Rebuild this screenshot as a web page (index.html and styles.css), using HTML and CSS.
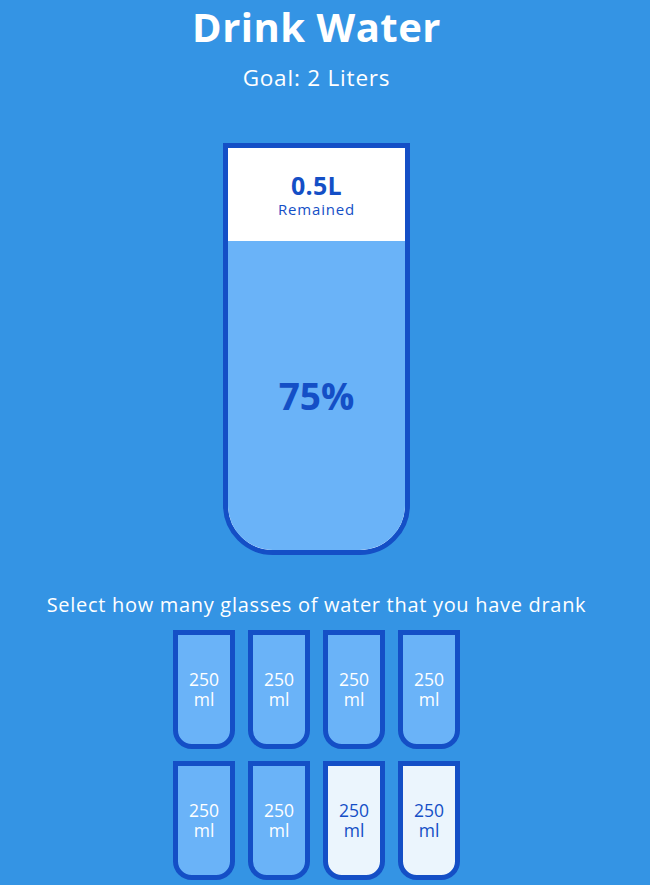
FILE: index.html
```html
<!DOCTYPE html>
<html lang="en">
<head>
  <meta charset="UTF-8">
  <meta name="viewport" content="width=device-width, initial-scale=1.0">
  <title>Drink Water</title>
  <link rel="stylesheet" href="styles.css">
</head>
<body>
  <h1>Drink Water</h1>
  <h3>Goal: 2 Liters</h3>

  <div class="cup">
    <div class="remained">
      <span class="liters">0.5L</span>
      <small>Remained</small>
    </div>
    <div class="percentage">75%</div>
  </div>

  <p class="text">Select how many glasses of water that you have drank</p>

  <div class="cups">
    <div class="cup cup-small full">250 ml</div>
    <div class="cup cup-small full">250 ml</div>
    <div class="cup cup-small full">250 ml</div>
    <div class="cup cup-small full">250 ml</div>
    <div class="cup cup-small full">250 ml</div>
    <div class="cup cup-small full">250 ml</div>
    <div class="cup cup-small">250 ml</div>
    <div class="cup cup-small">250 ml</div>
  </div>
</body>
</html>
```
FILE: styles.css
```css
:root {
  --border-color: #144fc6;
  --fill-color: #6ab3f8;
}

* {
  box-sizing: border-box;
}

html {
  overflow: hidden;
}

body {
  background-color: #3494e4;
  color: #fff;
  font-family: "Open Sans", Arial, sans-serif;
  display: flex;
  flex-direction: column;
  align-items: center;
  width: 633px;
  margin: 0;
}

h1 {
  font-size: 40px;
  line-height: 48px;
  letter-spacing: 0.5px;
  margin: 3px 0 0;
}

h3 {
  font-size: 22.5px;
  line-height: 28px;
  font-weight: 400;
  letter-spacing: 0.8px;
  margin: 13px 0 0;
}

.cup {
  background-color: #fff;
  border: 5px solid var(--border-color);
  color: var(--border-color);
  border-radius: 0 0 50px 50px;
  height: 412px;
  width: 187px;
  margin: 51px 0 0;
  display: flex;
  flex-direction: column;
  overflow: hidden;
}

.remained {
  display: flex;
  flex-direction: column;
  align-items: center;
  justify-content: center;
  text-align: center;
  flex: 1;
}

.remained .liters {
  font-size: 25px;
  line-height: 28px;
  font-weight: 700;
  letter-spacing: 0.3px;
}

.remained small {
  font-size: 15px;
  line-height: 20px;
  letter-spacing: 0.8px;
}

.percentage {
  background-color: var(--fill-color);
  display: flex;
  align-items: center;
  justify-content: center;
  font-weight: 700;
  font-size: 37px;
  height: 309px;
}

.text {
  font-size: 20px;
  line-height: 24px;
  letter-spacing: 0.7px;
  text-align: center;
  margin: 37.5px 0 0;
}

.cups {
  display: flex;
  flex-wrap: wrap;
  align-items: center;
  justify-content: center;
  width: 350px;
  margin-top: 7px;
}

.cup.cup-small {
  height: 118.75px;
  width: 62.5px;
  border-radius: 0 0 18.75px 18.75px;
  background-color: rgba(255, 255, 255, 0.9);
  cursor: pointer;
  font-size: 17.5px;
  line-height: 20px;
  align-items: center;
  justify-content: center;
  text-align: center;
  padding: 0 2px;
  margin: 6.25px;
}

.cup.cup-small.full {
  background-color: var(--fill-color);
  color: #fff;
}
```
